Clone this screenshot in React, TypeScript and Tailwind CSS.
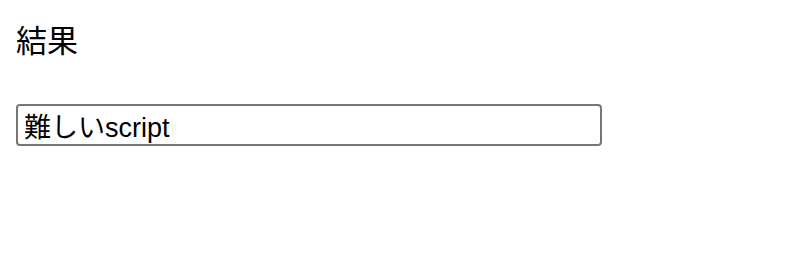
export default function App() {
  return (
    <div
      className="min-h-[256px] bg-white px-4 pt-5 text-black"
      style={{ fontFamily: '"Liberation Sans", "Noto Sans CJK JP", sans-serif' }}
    >
      <h2 className="text-[31px] leading-[44px]">結果</h2>
      <div className="mt-[40px]">
        <input
          type="text"
          defaultValue="難しいscript"
          className="h-[42px] w-[586px] rounded-[4px] border-2 border-[#767676] bg-white px-[6px] text-[27px] leading-[30px] text-black outline-none"
        />
      </div>
    </div>
  );
}
